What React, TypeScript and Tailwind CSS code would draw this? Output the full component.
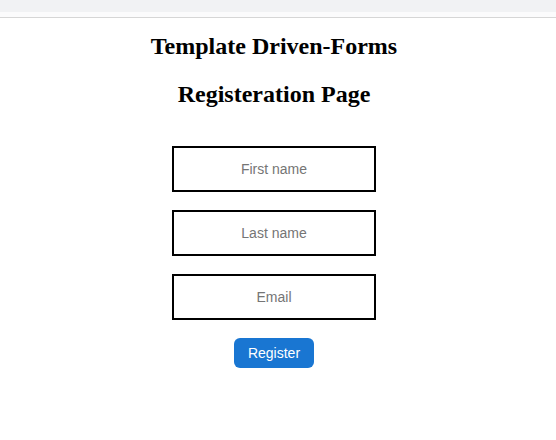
import React from "react";

export default function App() {
  return (
    <div className="min-h-[440px] w-[556px] bg-white">
      <div className="h-[12px] bg-[#f1f2f4]" />
      <div className="h-[5px] bg-[#fbfbfc]" />
      <div className="h-[1px] bg-[#d6d6d6]" />
      <div className="flex w-[548px] flex-col items-center">
        <h2 className="mt-[15px] text-[24px] font-bold leading-[27px] text-black" style={{ fontFamily: '"Liberation Serif", serif' }}>
          Template Driven-Forms
        </h2>
        <h2 className="mt-[21px] text-[24px] font-bold leading-[27px] text-black" style={{ fontFamily: '"Liberation Serif", serif' }}>
          Registeration Page
        </h2>
        <form className="mt-[38px] flex flex-col items-center gap-[18px]" style={{ fontFamily: '"Liberation Sans", Arial, sans-serif' }}>
          <input
            placeholder="First name"
            className="h-[46px] w-[204px] border-2 border-black bg-white text-center text-[14px] outline-none placeholder:text-[#757575]"
          />
          <input
            placeholder="Last name"
            className="h-[46px] w-[204px] border-2 border-black bg-white text-center text-[14px] outline-none placeholder:text-[#757575]"
          />
          <input
            placeholder="Email"
            className="h-[46px] w-[204px] border-2 border-black bg-white text-center text-[14px] outline-none placeholder:text-[#757575]"
          />
          <button
            type="button"
            className="h-[30px] w-[80px] rounded-[6px] bg-[#1976d2] text-[14px] text-white"
          >
            Register
          </button>
        </form>
      </div>
    </div>
  );
}
